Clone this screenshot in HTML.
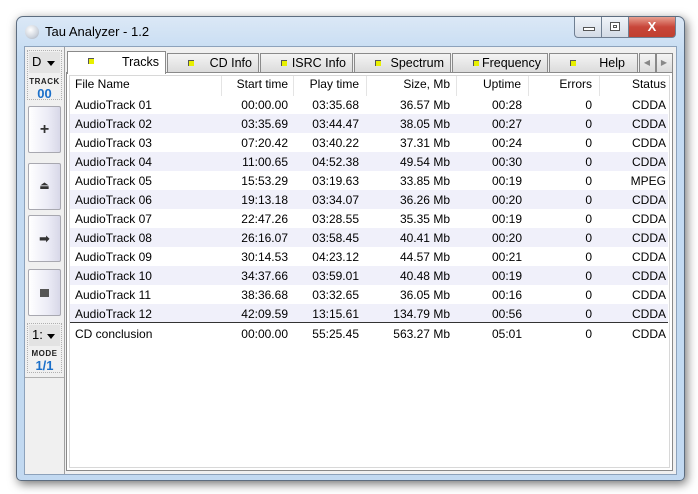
<!DOCTYPE html><html><head><style>
*{margin:0;padding:0;box-sizing:border-box}
body{width:698px;height:494px;background:#fff;position:relative;overflow:hidden;font-family:"Liberation Sans","DejaVu Sans",sans-serif;font-size:12px;color:#000}
.win{position:absolute;left:16px;top:16px;width:669px;height:465px;border-radius:7px 7px 5px 5px;background:linear-gradient(#dbe8f6,#c4dbf2 40px,#c2d9f1);border:1px solid #5d6d80;box-shadow:2px 3px 10px rgba(0,0,0,.55)}
.title{position:absolute;left:28px;top:7px;font-size:13px;color:#000}
.orb{position:absolute;left:8px;top:8px;width:14px;height:14px;border-radius:50%;background:radial-gradient(circle at 40% 35%,#fff,#cdd3dc 60%,#9aa3b0)}
.wb{position:absolute;top:0;height:21px;border:1px solid #6f7f92;border-top:none}
.client{position:absolute;left:7px;top:29px;width:653px;height:429px;background:#f0f0f0;border:1px solid #8da2bb}
.left{position:absolute;left:0;top:0;width:40px;height:427px;border-right:1px solid #a0a0a0;background:#f0f0f0}
.grp{position:absolute;left:2px;width:35px;border:1px dotted #b0b0b0;background:#f0f0f0}
.dd{position:absolute;left:1px;width:31px;height:21px;background:#e3e3e3;font-size:13px;padding:2px 0 0 3px}
.dd:after{content:"";position:absolute;right:5px;top:9px;border:4px solid transparent;border-top:5px solid #000}
.lbl{position:absolute;left:0;width:33px;text-align:center;font-size:8px;font-weight:bold;letter-spacing:.5px;color:#222}
.num{position:absolute;left:0;width:33px;text-align:center;font-size:13px;font-weight:bold;color:#1a6fc9}
.btn{position:absolute;left:3px;width:33px;height:47px;border:1px solid #a8a8b0;border-radius:2px;background:linear-gradient(90deg,#fff,#ececf6 60%,#d8d8e8);font-weight:bold;text-align:center;line-height:45px;color:#333}
.tabs{position:absolute;left:42px;top:4px;height:22px;width:610px}
.tab{position:absolute;top:2px;height:20px;border:1px solid #8a8a8a;border-bottom:none;background:linear-gradient(#f4f4f4,#dadada);font-size:12.5px;text-align:right;padding:2px 6px 0 0}
.tab i{position:absolute;left:20px;top:6px;width:6px;height:6px;background:#e8f000;border-left:1px solid #555;border-top:1px solid #555}
.tab.act{top:0;height:23px;background:#fff;z-index:2;padding-top:3px}
.panel{position:absolute;left:41px;top:25px;width:607px;height:399px;background:#fff;border:1px solid #8a8a8a}
.panel:after{content:"";position:absolute;left:0;top:0;right:0;bottom:0;outline:1px solid #d8d8d8;outline-offset:-3px;pointer-events:none}
.row{position:absolute;left:3px;width:598px;height:19px;font-size:12px}
.row span{position:absolute;top:3px;white-space:nowrap}
.alt{background:#f0f0fa}
.hdr span{top:2px}
.sep{position:absolute;top:0;width:1px;height:21px;background:#e4e4e4}
</style></head><body>
<div class="win">
<div class="orb"></div><div class="title">Tau Analyzer - 1.2</div>
<div class="wb" style="left:557px;width:28px;border-radius:0 0 0 4px;background:linear-gradient(#f0f4f9,#d3dbe6)"><div style="position:absolute;left:8px;top:10px;width:12px;height:4px;border:1px solid #555;background:#fff"></div></div>
<div class="wb" style="left:585px;width:27px;background:linear-gradient(#f0f4f9,#d3dbe6);border-left:none"><div style="position:absolute;left:8px;top:5px;width:10px;height:9px;border:1px solid #555;background:#fff"><div style="margin:2px;height:3px;border:1px solid #555"></div></div></div>
<div class="wb" style="left:612px;width:47px;border-radius:0 0 4px 0;background:linear-gradient(#e8a090,#c8463a 50%,#c04030);border-left:none;color:#fff;font-weight:bold;text-align:center;font-size:13px;line-height:20px">X</div>
<div class="client">
<div class="left">
<div class="grp" style="top:3px;height:50px"><div class="dd" style="top:1px">D</div><div class="lbl" style="top:26px">TRACK</div><div class="num" style="top:35px">00</div></div>
<div class="btn" style="top:59px;font-size:16px">+</div>
<div class="btn" style="top:116px;font-size:11px">⏏</div>
<div class="btn" style="top:168px;font-size:13px">➡</div>
<div class="btn" style="top:222px"><div style="position:absolute;left:11px;top:19px;width:9px;height:8px;background:#555"></div></div>
<div class="grp" style="top:276px;height:50px"><div class="dd" style="top:1px">1:</div><div class="lbl" style="top:25px">MODE</div><div class="num" style="top:34px">1/1</div></div>
<div style="position:absolute;left:0;top:330px;width:39px;border-top:1px solid #b0b0b0"></div>
</div>
<div class="tabs">
<div class="tab act" style="left:0;width:99px"><i></i>Tracks</div>
<div class="tab" style="left:100px;width:92px"><i></i>CD Info</div>
<div class="tab" style="left:193px;width:93px"><i></i>ISRC Info</div>
<div class="tab" style="left:287px;width:97px"><i></i>Spectrum</div>
<div class="tab" style="left:385px;width:96px"><i></i>Frequency</div>
<div class="tab" style="left:482px;width:89px;padding-right:12px"><i></i>Help</div>
<div class="tab" style="left:572px;width:17px;font-size:8px;padding:4px 5px 0 0;color:#888">◀</div>
<div class="tab" style="left:589px;width:17px;font-size:8px;padding:4px 5px 0 0;color:#888">▶</div>
</div>
<div class="panel">
<div class="row hdr" style="top:2px;height:21px">
<span style="left:5px">File Name</span><span style="right:380px">Start time</span><span style="right:309px">Play time</span><span style="right:218px">Size, Mb</span><span style="left:413px">Uptime</span><span style="right:76px">Errors</span><span style="right:2px">Status</span>
<div class="sep" style="left:151px"></div><div class="sep" style="left:223px"></div><div class="sep" style="left:296px"></div><div class="sep" style="left:386px"></div><div class="sep" style="left:458px"></div><div class="sep" style="left:529px"></div>
</div>
<div id="rows"></div>
</div>
</div>
</div>
<script>
var d=[["AudioTrack 01","00:00.00","03:35.68","36.57 Mb","00:28","0","CDDA"],["AudioTrack 02","03:35.69","03:44.47","38.05 Mb","00:27","0","CDDA"],["AudioTrack 03","07:20.42","03:40.22","37.31 Mb","00:24","0","CDDA"],["AudioTrack 04","11:00.65","04:52.38","49.54 Mb","00:30","0","CDDA"],["AudioTrack 05","15:53.29","03:19.63","33.85 Mb","00:19","0","MPEG"],["AudioTrack 06","19:13.18","03:34.07","36.26 Mb","00:20","0","CDDA"],["AudioTrack 07","22:47.26","03:28.55","35.35 Mb","00:19","0","CDDA"],["AudioTrack 08","26:16.07","03:58.45","40.41 Mb","00:20","0","CDDA"],["AudioTrack 09","30:14.53","04:23.12","44.57 Mb","00:21","0","CDDA"],["AudioTrack 10","34:37.66","03:59.01","40.48 Mb","00:19","0","CDDA"],["AudioTrack 11","38:36.68","03:32.65","36.05 Mb","00:16","0","CDDA"],["AudioTrack 12","42:09.59","13:15.61","134.79 Mb","00:56","0","CDDA"],["CD conclusion","00:00.00","55:25.45","563.27 Mb","05:01","0","CDDA"]];
var h="";d.forEach(function(r,i){var t=22+i*19+(i==12?1:0);h+='<div class="row'+(i%2?' alt':'')+'" style="top:'+t+'px'+(i==11?';border-bottom:1px solid #333':'')+'"><span style="left:5px">'+r[0]+'</span><span style="right:380px">'+r[1]+'</span><span style="right:309px">'+r[2]+'</span><span style="right:218px">'+r[3]+'</span><span style="left:422px">'+r[4]+'</span><span style="right:76px">'+r[5]+'</span><span style="right:2px">'+r[6]+'</span></div>'});
document.getElementById("rows").innerHTML=h;
</script>
</body></html>
